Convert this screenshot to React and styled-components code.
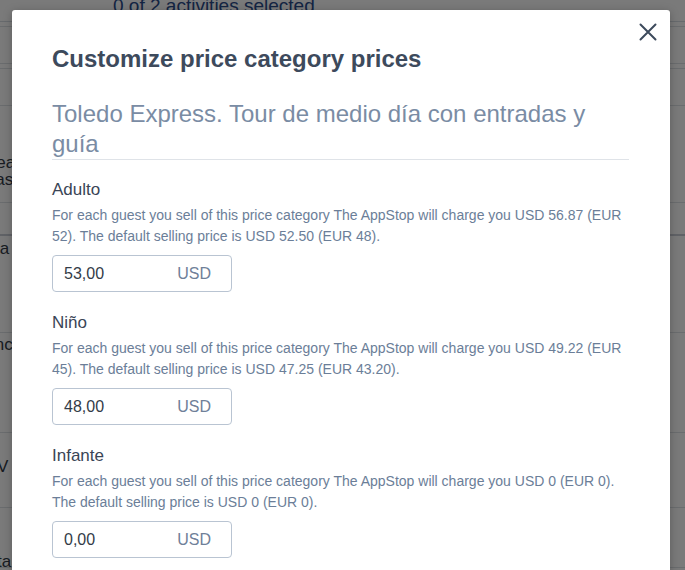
import React from "react";
import styled, { createGlobalStyle } from "styled-components";

const Global = createGlobalStyle`
  html, body { margin: 0; padding: 0; background: #fff; }
  body { font-family: "Liberation Sans", Arial, Helvetica, sans-serif; overflow: hidden; }
  * { box-sizing: border-box; }
`;

const Page = styled.div`
  width: 685px;
  height: 570px;
  overflow: hidden;
  position: relative;
  color: #2c3a4f;
`;

const PageHeader = styled.div`
  height: 22px;
  padding-left: 113px;
  font-size: 19px;
  line-height: 12px;
  color: #2b4c8c;
  overflow: hidden;
  white-space: nowrap;
  border-bottom: 1px solid #d8dde3;
`;

const Row = styled.div`
  height: ${(p) => p.$h}px;
  border-bottom: ${(p) => (p.$thick ? "2px solid #c9ced6" : "1px solid #dde1e6")};
  font-size: 17px;
  line-height: 17px;
  color: #333c48;
  padding-top: ${(p) => p.$pt || 0}px;
  margin-left: ${(p) => p.$ml || 0}px;
  white-space: nowrap;
`;

const Overlay = styled.div`
  position: absolute;
  inset: 0;
  background: rgba(0, 0, 0, 0.52);
`;

const Modal = styled.div`
  position: absolute;
  left: 12px;
  top: 10px;
  width: 658px;
  height: 600px;
  background: #fff;
  border-radius: 3px;
  padding: 35px 41px 0 40px;
  box-shadow: 0 2px 10px rgba(0, 0, 0, 0.25);
`;

const Close = styled.button`
  position: absolute;
  right: 10px;
  top: 10px;
  width: 24px;
  height: 24px;
  padding: 0;
  border: 0;
  background: transparent;
  display: flex;
  align-items: center;
  justify-content: center;
  cursor: pointer;
`;

const Title = styled.h2`
  margin: 0;
  font-size: 24px;
  line-height: 28px;
  font-weight: 700;
  color: #3d4a5c;
`;

const Subtitle = styled.h3`
  margin: 26px 0 0;
  font-size: 24px;
  line-height: 30px;
  font-weight: 400;
  color: #7a8ca4;
  padding-bottom: 0;
  border-bottom: 1px solid #dfe3e8;
`;

const Category = styled.div`
  display: flex;
  flex-direction: column;
  margin-top: ${(p) => p.$mt}px;
`;

const Label = styled.div`
  font-size: 17px;
  line-height: 20px;
  color: #3a4556;
`;

const Desc = styled.p`
  margin: 5px 0 0;
  font-size: 14px;
  line-height: 21px;
  color: #6b7e98;
`;

const InputBox = styled.div`
  margin-top: 8px;
  width: 180px;
  height: 37px;
  border: 1px solid #b9c4d2;
  border-radius: 4px;
  display: flex;
  align-items: center;
  padding: 0 20px 0 11px;
`;

const Value = styled.span`
  flex: 1;
  font-size: 16px;
  color: #333c48;
`;

const Unit = styled.span`
  font-size: 16px;
  color: #6f8099;
`;

const categories = [
  {
    name: "Adulto",
    text: "For each guest you sell of this price category The AppStop will charge you USD 56.87 (EUR 52). The default selling price is USD 52.50 (EUR 48).",
    value: "53,00",
  },
  {
    name: "Niño",
    text: "For each guest you sell of this price category The AppStop will charge you USD 49.22 (EUR 45). The default selling price is USD 47.25 (EUR 43.20).",
    value: "48,00",
  },
  {
    name: "Infante",
    text: "For each guest you sell of this price category The AppStop will charge you USD 0 (EUR 0). The default selling price is USD 0 (EUR 0).",
    value: "0,00",
  },
];

export default function App() {
  return (
    <>
      <Global />
      <Page>
        <PageHeader>0 of 2 activities selected</PageHeader>
        <Row $h={5} />
        <Row $h={37} />
        <Row $h={5} />
        <Row $h={37} />
        <Row $h={97} $pt={48} $ml={-16}>Real<br />Pase a</Row>
        <Row $h={33} $thick />
        <Row $h={97} $pt={4} $ml={-20}>Exa</Row>
        <Row $h={100} $pt={3} $ml={-26}>Sanc</Row>
        <Row $h={75} $pt={25} $ml={-3}>V</Row>
        <Row $h={60} $pt={45} $ml={-3}>ta</Row>
        <Overlay />
        <Modal role="dialog">
          <Close aria-label="Close">
            <svg width="18" height="18" viewBox="0 0 18 18" fill="none">
              <path d="M1.5 1.5 L16.5 16.5 M16.5 1.5 L1.5 16.5" stroke="#3d4a5c" strokeWidth="2" strokeLinecap="round" />
            </svg>
          </Close>
          <Title>Customize price category prices</Title>
          <Subtitle>Toledo Express. Tour de medio día con entradas y guía</Subtitle>
          {categories.map((c, i) => (
            <Category key={c.name} $mt={i === 0 ? 20 : 21}>
              <Label>{c.name}</Label>
              <Desc>{c.text}</Desc>
              <InputBox>
                <Value>{c.value}</Value>
                <Unit>USD</Unit>
              </InputBox>
            </Category>
          ))}
        </Modal>
      </Page>
    </>
  );
}
